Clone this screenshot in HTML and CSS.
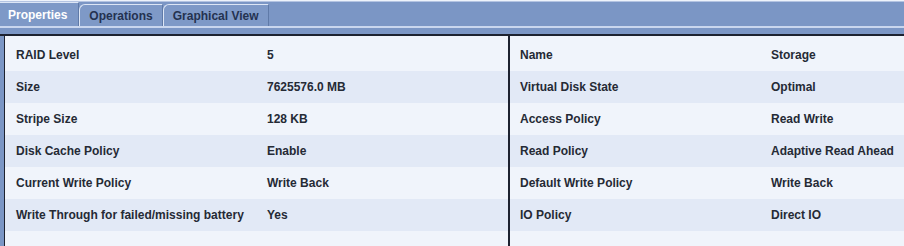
FILE: index.html
```html
<!DOCTYPE html>
<html>
<head>
<meta charset="utf-8">
<link rel="stylesheet" href="styles.css">
</head>
<body>
<div class="app">
  <div class="tabbar">
    <div class="tab tab-active">Properties</div>
    <div class="tab">Operations</div>
    <div class="tab">Graphical View</div>
  </div>
  <div class="band"></div>
  <div class="frame">
    <div class="panel panel-left">
      <div class="row"><span class="label">RAID Level</span><span class="value">5</span></div>
      <div class="row alt"><span class="label">Size</span><span class="value">7625576.0 MB</span></div>
      <div class="row"><span class="label">Stripe Size</span><span class="value">128 KB</span></div>
      <div class="row alt"><span class="label">Disk Cache Policy</span><span class="value">Enable</span></div>
      <div class="row"><span class="label">Current Write Policy</span><span class="value">Write Back</span></div>
      <div class="row alt"><span class="label">Write Through for failed/missing battery</span><span class="value">Yes</span></div>
    </div>
    <div class="panel panel-right">
      <div class="row"><span class="label">Name</span><span class="value">Storage</span></div>
      <div class="row alt"><span class="label">Virtual Disk State</span><span class="value">Optimal</span></div>
      <div class="row"><span class="label">Access Policy</span><span class="value">Read Write</span></div>
      <div class="row alt"><span class="label">Read Policy</span><span class="value">Adaptive Read Ahead</span></div>
      <div class="row"><span class="label">Default Write Policy</span><span class="value">Write Back</span></div>
      <div class="row alt"><span class="label">IO Policy</span><span class="value">Direct IO</span></div>
    </div>
  </div>
</div>
</body>
</html>
```
FILE: styles.css
```css
html, body {
  margin: 0;
  padding: 0;
  background: #f0f4fb;
}
.app {
  width: 904px;
  height: 246px;
  display: flex;
  flex-direction: column;
  font-family: "Liberation Sans", Arial, sans-serif;
  font-weight: bold;
  font-size: 12px;
  overflow: hidden;
}
.tabbar {
  display: flex;
  align-items: flex-end;
  height: 25px;
  background: #7b96c5;
  border-top: 1px solid #eef3fb;
  border-bottom: 2px solid #c9d6ee;
  box-shadow: inset 0 1px 0 #b4c4e2;
}
.tab {
  box-sizing: border-box;
  height: 22px;
  padding: 1px 9px 0 9px;
  display: flex;
  align-items: center;
  color: #243250;
  background: #7e99c7;
  border-top: 1px solid #dde6f5;
  border-left: 1px solid #dde6f5;
  border-right: 1px solid #5f7aa8;
  border-top-left-radius: 6px;
  font-size: 12px;
}
.tab-active {
  height: 24px;
  color: #ffffff;
  padding: 1px 11px 0 8px;
  border-left: none;
  border-top-left-radius: 0;
}
.band {
  height: 6px;
  background: #7b96c5;
  border-bottom: 2px solid #1d2230;
}
.frame {
  flex: 1;
  display: flex;
  background: #f0f4fb;
  border-left: 4px solid #7b96c5;
}
.panel {
  padding-top: 3px;
}
.panel-left {
  width: 503px;
  border-left: 1px solid #1d2230;
  border-right: 2px solid #1d2230;
}
.panel-right {
  flex: 1;
}
.row {
  height: 32px;
  display: flex;
  align-items: center;
  color: #252a35;
}
.row.alt {
  background: #e2e9f6;
}
.panel-left .label {
  width: 251px;
  padding-left: 11px;
}
.panel-right .label {
  width: 251px;
  padding-left: 10px;
}
.value {
  flex: 1;
}
```
